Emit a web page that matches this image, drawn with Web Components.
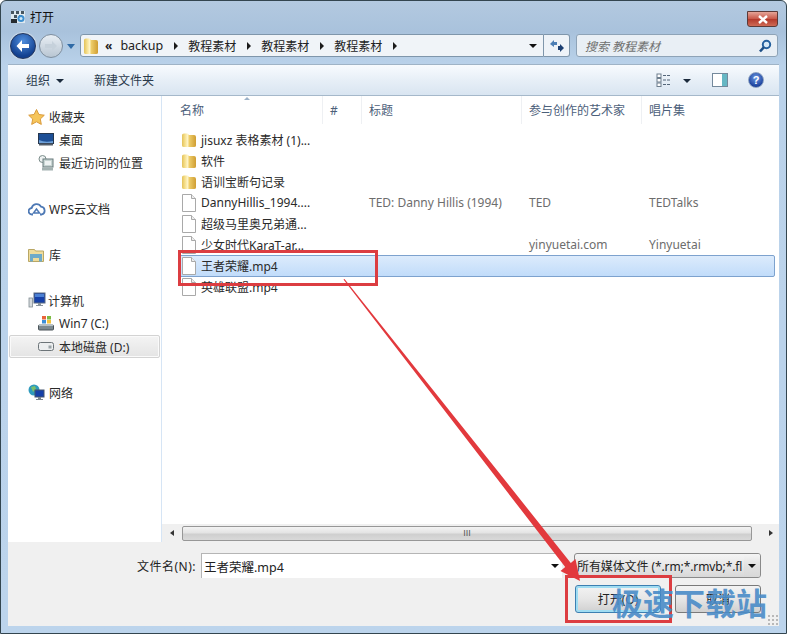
<!DOCTYPE html>
<html><head><meta charset="utf-8"><style>
html,body{margin:0;padding:0;width:787px;height:634px;overflow:hidden}
body{font:12px "Noto Sans","Noto Sans CJK SC",sans-serif;color:#2a2a2a}
</style></head><body>
<x-dialog>
 <x-titlebar slot="title"></x-titlebar>
 <x-navbar slot="nav"></x-navbar>
 <x-toolbar slot="tools"></x-toolbar>
 <x-sidebar slot="side"></x-sidebar>
 <x-filelist slot="list"></x-filelist>
 <x-footer slot="foot"></x-footer>
 <x-annotations slot="over"></x-annotations>
</x-dialog>
<script>
const FGRAD=`<defs><linearGradient id="fg" x1="0" x2="1" y1="0" y2="0"><stop offset="0" stop-color="#e3c25a"/><stop offset=".22" stop-color="#f6e08e"/><stop offset=".42" stop-color="#fff6cc"/><stop offset=".5" stop-color="#efcf6c"/><stop offset="1" stop-color="#cf9d32"/></linearGradient></defs>`;
const FOLDER=`<svg width="14" height="16" viewBox="0 0 14 16" style="margin-left:1px">${FGRAD}<path d="M0 3Q0 1.500 2 1.500h3.500L7 3h5Q14 3 14 5v8.500Q14 15 12 15H2Q0 15 0 13.500z" fill="url(#fg)"/></svg>`;
const DOC=`<svg width="16" height="18" viewBox="0 0 16 18"><path d="M1.500.5h9l4 4v13h-13z" fill="#fff" stroke="#a9a9a9"/><path d="M10.500.5v4h4" fill="#eee" stroke="#a9a9a9"/></svg>`;
function def(name,css,html,init){
 customElements.define(name,class extends HTMLElement{
  constructor(){super();this.attachShadow({mode:'open'}).innerHTML=`<style>${css}</style>${html}`;}
  connectedCallback(){init&&init.call(this,this.shadowRoot)}
 });
}
def('x-dialog',`
:host{display:block;position:relative;width:787px;height:634px;box-sizing:border-box;border:1px solid #33454f;border-radius:6px 6px 0 0;overflow:hidden;background:linear-gradient(#b3c9e0 0,#a9c2dc 30px,#bad2ea 64px,#bcd4ec 100%)}
.col{display:flex;flex-direction:column;height:100%;box-sizing:border-box;padding:0 7px 7px}
.main{display:flex;height:446px;background:#fff}
.inner{background:#f0f0f0;display:flex;flex-direction:column;flex:1;border-top:1px solid #9fb3c6;box-sizing:border-box}
`,`<div class="col"><slot name="title"></slot><slot name="nav"></slot>
<div class="inner"><slot name="tools"></slot><div class="main"><slot name="side"></slot><slot name="list"></slot></div><slot name="foot"></slot></div></div>
<slot name="over"></slot>`);
def('x-titlebar',`
:host{display:flex;height:31px;align-items:center;gap:4px;font-size:12px;color:#111;position:relative;padding-left:2px}
svg{display:block}
.x{margin-left:auto;width:31px;height:16px;box-sizing:border-box;margin-top:5px;margin-right:1px;border:1px solid #5c3a38;border-radius:0 0 3px 3px;background:linear-gradient(#e5a598,#c9594a 48%,#b33a2c 52%,#cf6a55);display:flex;align-items:center;justify-content:center}
`,`<svg width="16" height="16" viewBox="0 0 16 16"><rect x="1" y="2" width="14" height="12" fill="#dfe9ef"/><path d="M1 2h3v3H1zM6 2h3v3H6zM11 2h3v3h-3zM4 6h3v3H4zM9 6h3v3H9z" fill="#46555f"/><circle cx="11" cy="9.500" r="3.500" fill="#3d8fd0"/><circle cx="11" cy="9.500" r="1.500" fill="#cfe8f8"/><rect x="1" y="10" width="6" height="4" fill="#262b2f"/></svg><span>打开</span>
<div class="x"><svg width="12" height="9" viewBox="0 0 12 9"><path d="M2 1l8 7M10 1L2 8" stroke="#fff" stroke-width="2.400"/></svg></div>`);
def('x-navbar',`
:host{display:flex;height:32px;align-items:flex-start;box-sizing:border-box;padding-top:2px;font-size:12px;color:#222}
.back{width:26px;height:26px;margin:-1px 0 0 2px;border-radius:50%;background:radial-gradient(circle at 50% 30%,#4f8ede,#12408f 72%);border:1px solid #23355c;box-sizing:border-box;display:flex;align-items:center;justify-content:center;box-shadow:0 0 0 1px #c7d6e6}
.fwd{width:24px;height:24px;margin:0 0 0 3px;border-radius:50%;background:linear-gradient(#e8eef4,#b9c6d3);border:1px solid #7f8f9f;box-sizing:border-box;display:flex;align-items:center;justify-content:center}
.dd{width:0;height:0;border:4px solid transparent;border-top:5px solid #2f6aa6;border-bottom:0;margin:10px 4px 0 4px}
.addr{display:flex;align-items:center;width:464px;height:23px;box-sizing:border-box;border:1px solid #7f96ab;border-radius:3px 0 0 3px;background:#f0f4f8;padding-left:3px;margin-left:1px}
.addr svg.f{margin-right:7px}
.seg{display:flex;align-items:center}
.tri{width:0;height:0;border:4px solid transparent;border-left:4px solid #1b1b1b;border-right:0;margin:0 10px 0 11px}
.ld{margin-left:auto;margin-right:6px;width:0;height:0;border:4px solid transparent;border-top:4px solid #111;border-bottom:0}
.ref{width:26px;height:23px;box-sizing:border-box;border:1px solid #7f96ab;border-left:0;border-radius:0 3px 3px 0;background:#eef3f8;display:flex;align-items:center;justify-content:center;margin-right:6px}
.search{width:202px;height:23px;box-sizing:border-box;border:1px solid #8ea3b7;border-radius:3px;background:#e9eff5;display:flex;align-items:center;padding-left:8px;color:#6f6f6f;font-size:12px;font-style:italic;justify-content:space-between;padding-right:5px}
`,`<div class="back"><svg width="16" height="14" viewBox="0 0 16 14"><path d="M7 1L1.500 7 7 13V9h7V5H7z" fill="#fff"/></svg></div>
<div class="fwd"><svg width="14" height="12" viewBox="0 0 14 12"><path d="M8 1l5 5-5 5V8H1V4h7z" fill="#c6d1db"/></svg></div><div class="dd"></div>
<div class="addr"><svg class="f" width="14" height="18" viewBox="0 0 14 18">${FGRAD}<path d="M0 3Q0 1.500 2 1.500h3.500L7 3h5Q14 3 14 5v10.500Q14 17 12 17H2Q0 17 0 15.500z" fill="url(#fg)"/></svg>
<span style="font-size:12px;margin-right:9px;font-weight:bold;letter-spacing:-1px">«</span><span class="seg" style="font-size:12.500px">backup</span><i class="tri"></i><span class="seg">教程素材</span><i class="tri"></i><span class="seg">教程素材</span><i class="tri"></i><span class="seg">教程素材</span><i class="tri"></i><i class="ld"></i></div>
<div class="ref"><svg width="16" height="16" viewBox="0 0 16 16"><path d="M1 6l4-4v2h3v3H5v2z" fill="#4d7fb5"/><path d="M15 10l-4 4v-2H9V8h2V6z" fill="#1c3f72"/></svg></div>
<div class="search"><span>搜索 教程素材</span><svg width="14" height="14" viewBox="0 0 14 14"><circle cx="8.500" cy="5.500" r="3.700" fill="#d6e8f6" stroke="#26619f" stroke-width="2"/><path d="M6 8L2 12.500" stroke="#1e4f86" stroke-width="2.600"/></svg></div>`);
def('x-toolbar',`
:host{display:flex;height:31px;align-items:center;box-sizing:border-box;border-bottom:1px solid #a5b8ca;background:linear-gradient(#f8fbfe,#e7eff7 50%,#d9e5f1);padding-left:18px;font-size:12px;color:#2a3a4c}
.tri{width:0;height:0;border:4px solid transparent;border-top:4px solid #1b2a3c;border-bottom:0;margin:2px 0 0 6px}
.nw{margin-left:30px}
.r{margin-left:auto;display:flex;align-items:center}
.help{width:16px;height:16px;box-sizing:border-box;border-radius:50%;background:radial-gradient(circle at 50% 35%,#6c9ae6,#1a3f9a 75%);color:#fff;font:bold 11px "Liberation Sans",sans-serif;display:flex;align-items:center;justify-content:center;margin:0 15px 0 20px;border:1px solid #8aa0c0}
`,`<span>组织</span><i class="tri"></i><span class="nw">新建文件夹</span>
<div class="r"><svg width="16" height="15" viewBox="0 0 16 15"><rect x="1" y="1" width="4" height="3.500" fill="#fff" stroke="#6e7f8e"/><rect x="1" y="5.500" width="4" height="3.500" fill="#fff" stroke="#6e7f8e"/><rect x="1" y="10" width="4" height="3.500" fill="#fff" stroke="#6e7f8e"/><path d="M7 2.500h8M7 7h8M7 11.500h8" stroke="#55677a" stroke-dasharray="3 1"/></svg>
<i class="tri" style="margin-left:11px;margin-right:21px;border-width:4px;border-top-color:#1b2a3c"></i>
<svg width="16" height="14" viewBox="0 0 16 14"><rect x=".5" y=".5" width="15" height="13" fill="#fff" stroke="#74899c"/><rect x="10" y="1" width="5" height="12" fill="#66b7c4"/></svg>
<div class="help">?</div></div>`);
const ICONS={
star:`<svg width="17" height="16" viewBox="0 0 17 16"><path d="M8.500.5l2.400 5 5.400.7-4 3.800 1 5.400-4.800-2.600-4.800 2.600 1-5.400-4-3.800 5.400-.7z" fill="#f6c55a" stroke="#d99a3c"/></svg>`,
desk:`<svg width="16" height="13" viewBox="0 0 16 13"><rect x=".5" y=".5" width="15" height="10" fill="#1d4f96" stroke="#26374f"/><path d="M1 7q6 3 14 1v2H1z" fill="#6ea0d8"/><rect x="1" y="10.500" width="14" height="2" fill="#555e69"/></svg>`,
recent:`<svg width="16" height="16" viewBox="0 0 16 16"><circle cx="4.500" cy="4" r="3.500" fill="#eef2f2" stroke="#7b8c8a"/><rect x="5" y="4" width="10" height="8" fill="#c7d4d2" stroke="#66797a"/><rect x="7" y="6" width="6" height="4" fill="#eef2f2"/><rect x="4" y="12.500" width="11" height="3" fill="#a4b2b1"/></svg>`,
cloud:`<svg width="18" height="14" viewBox="0 0 18 14"><path d="M5 12.500H4A3.200 3.200 0 0 1 3.700 6 5 5 0 0 1 13 4.700a4 4 0 0 1 .800 7.800H12" fill="none" stroke="#4e79b5" stroke-width="1.800"/><path d="M8.500 7l-3 4h6z" fill="none" stroke="#4e79b5" stroke-width="1.500"/></svg>`,
lib:`<svg width="16" height="16" viewBox="0 0 16 16"><path d="M.5 2.500h6l1 1.500h8v10.500H.5z" fill="#efdc9c" stroke="#b9a765"/><path d="M2 7h12v7.500H11V11H5v3.500H2z" fill="#6eaac9"/></svg>`,
pc:`<svg width="18" height="17" viewBox="0 0 18 17"><rect x="1" y="6" width="3.500" height="9" fill="#d6dadc" stroke="#7f8a92" stroke-width=".8"/><rect x="6" y="1" width="11" height="10" fill="#1640a8" stroke="#5a6a80"/><path d="M7 2h9v3H7z" fill="#4b80d4"/><path d="M10 11h3v2h2v1H8v-1h2z" fill="#8a949c"/></svg>`,
win:`<svg width="16" height="17" viewBox="0 0 16 17"><rect x=".5" y="10" width="15" height="5" rx="1" fill="#7d8a90" stroke="#4a5358"/><rect x="1" y="9" width="14" height="2" fill="#b6c0c4"/><rect x="4" y="1" width="4" height="3.500" fill="#e9643a"/><rect x="9" y="1" width="4" height="3.500" fill="#7dbb42"/><rect x="4" y="5" width="4" height="3.500" fill="#3c8fd8"/><rect x="9" y="5" width="4" height="3.500" fill="#f3c23c"/></svg>`,
disk:`<svg width="16" height="9" viewBox="0 0 16 9"><rect x=".5" y=".5" width="15" height="8" rx="2" fill="#eceeef" stroke="#6c7478"/><rect x="10.500" y="3.500" width="3" height="3" fill="#9aa3a7"/></svg>`,
net:`<svg width="18" height="17" viewBox="0 0 18 17"><circle cx="6" cy="6" r="5.500" fill="#2f9bbd"/><path d="M3 3l4-1 1 3-3 3z" fill="#7cc06b"/><rect x="7" y="6" width="9" height="7" fill="#1640a8" stroke="#44556c"/><path d="M10 13h3v2h2v1H8v-1h2z" fill="#7c868e"/></svg>`};
def('x-sidebar',`
:host{display:block;width:154px;flex:none;box-sizing:border-box;padding:9px 1px 0;border-right:1px solid #d6e5f5;color:#2a2a2a}
.r{height:23px;display:flex;align-items:center;box-sizing:border-box;white-space:nowrap;width:151px}
.l0{padding-left:19px}.l1{padding-left:29px}
.i{width:21px;display:flex;justify-content:flex-start;flex:none}
.sel{background:linear-gradient(#f4f4f4,#e4e4e4);border:1px solid #d3d3d3;border-radius:2px;box-shadow:inset 0 0 0 1px #fafafa;padding-left:28px}
`,['star:0:收藏夹','desk:1:桌面','recent:1:最近访问的位置','','cloud:0:WPS云文档','','lib:0:库','','pc:0:计算机','win:1:Win7 (C:)','disk:1:本地磁盘 (D:):sel','','net:0:网络'].map(s=>{
 if(!s)return '<div class="r"></div>';
 const m=s.match(/^(\w+):(\d):(.*?)(:sel)?$/);
 const w=m[1]=='pc'?'style="width:20px"':'';
 return `<div class="r l${m[2]} ${m[4]?'sel':''}"><span class="i" ${w}>${ICONS[m[1]]}</span><span>${m[3]}</span></div>`}).join(''));
def('x-filelist',`
:host{display:flex;flex-direction:column;flex:1;min-width:0;color:#333}
.hd{height:28px;display:flex;padding-left:11px;color:#4c607a;flex:none;position:relative;margin-bottom:5px}
.hd span{box-sizing:border-box;height:28px;display:flex;align-items:center;padding-left:7px;border-right:1px solid #eef0f3;white-space:nowrap}
.hd span:last-child{border:0}
.up{position:absolute;left:82px;top:1px;width:0;height:0;border:3px solid transparent;border-bottom:3px solid #9bb1c8;border-top:0}
.rows{flex:1;min-height:0}
.row{height:21px;display:flex;align-items:center;padding-left:11px;box-sizing:border-box;white-space:nowrap;margin-right:4px}
.row .c{box-sizing:border-box;padding-left:7px;color:#6d6d6d;white-space:nowrap}
.nm{display:flex;align-items:center;width:150px;flex:none;color:#2a2a2a;padding-left:8px;box-sizing:border-box}
.nm .ic{width:20px;flex:none;display:flex;justify-content:flex-start}
.sel{background:linear-gradient(#dcebfc,#c1dcfa);border:1px solid #7da2ce;height:22px;border-radius:2px;margin-left:16px;padding-left:0;margin-bottom:-1px}
.sb{height:18px;display:flex;align-items:center;flex:none;background:#f0f0f0;box-sizing:border-box}
.thumb{width:570px;height:15px;margin-left:8px;border:1px solid #979797;border-radius:2px;box-sizing:border-box;background:linear-gradient(#f3f3f3,#e4e4e4 45%,#cfcfcf 55%,#d9d9d9);display:flex;align-items:center;justify-content:center;font:9px "Liberation Sans",sans-serif;color:#555}
.a{width:0;height:0;border:3.500px solid transparent;flex:none}
.al{border-right:4px solid #333;border-left:0;margin-left:8px}
.ar{border-left:4px solid #333;border-right:0;margin-left:17px}
`,`<div class="hd"><i class="up"></i><span style="width:150px">名称</span><span style="width:39px">#</span><span style="width:160px">标题</span><span style="width:120px">参与创作的艺术家</span><span>唱片集</span></div>
<div class="rows">${[
['f','jisuxz 表格素材 (1)...'],['f','软件'],['f','语训宝断句记录'],
['d','DannyHillis_1994....','TED: Danny Hillis (1994)','TED','TEDTalks'],
['d','超级马里奥兄弟通...'],['d','少女时代KaraT-ar...','','yinyuetai.com','Yinyuetai'],
['d','王者荣耀.mp4','','','',1],['d','英雄联盟.mp4']
].map(r=>`<div class="row ${r[5]?'sel':''}"><div class="nm" ${r[5]?'style="width:144px;padding-left:2px"':''}><span class="ic">${r[0]=='f'?FOLDER:DOC}</span>${r[1]}</div><div class="c" style="width:39px"></div><div class="c" style="width:160px">${r[2]||''}</div><div class="c" style="width:120px">${r[3]||''}</div><div class="c">${r[4]||''}</div></div>`).join('')}</div>
<div class="sb"><i class="a al"></i><div class="thumb">III</div><i class="a ar"></i></div>`);
def('x-footer',`
:host{display:block;flex:1;background:#f0f0f0;position:relative;font-size:12px;color:#222}
.a{display:flex;align-items:center;height:25px;margin-top:11px}
.lb{width:188px;text-align:right;box-sizing:border-box;letter-spacing:.5px}
.inp{width:361px;height:25px;background:#fff;border:1px solid #b5b5b5;border-width:1px 0 0 1px;box-sizing:border-box;display:flex;align-items:center;padding-left:2px;position:relative;margin-left:5px;margin-right:12px;font-size:12.500px}
.t{position:absolute;right:3px;top:10px;width:0;height:0;border:4px solid transparent;border-top:4px solid #111;border-bottom:0}
.sel{width:187px;height:25px;box-sizing:border-box;border:1px solid #8a8a8a;border-radius:3px;background:linear-gradient(#f4f4f4,#e8e8e8 50%,#d8d8d8);display:flex;align-items:center;padding-left:2px;position:relative;overflow:hidden;white-space:nowrap;font-size:12px;letter-spacing:-.1px}
.sel b{position:absolute;right:0;top:0;bottom:0;width:16px;background:linear-gradient(#f4f4f4,#e2e2e2 50%,#d8d8d8);display:flex;align-items:center;justify-content:center}
.sel i{width:0;height:0;border:4px solid transparent;border-top:4px solid #111;border-bottom:0}
.b{display:flex;justify-content:flex-end;gap:14px;padding-right:18px;margin-top:7px}
.btn{width:86px;height:28px;box-sizing:border-box;border-radius:3px;border:1px solid #7a7a7a;background:linear-gradient(#f3f3f3,#e6e6e6 50%,#d0d0d0);display:flex;align-items:center;justify-content:center}
.btn.p{border-color:#3c7fb1;box-shadow:inset 0 0 0 2px #9fdcf2}
.grip{position:absolute;right:1px;bottom:1px;width:11px;height:11px;background-image:radial-gradient(#b8b8b8 1px,transparent 1.200px);background-size:4px 4px}
`,`<div class="a"><div class="lb">文件名(N):</div><div class="inp">王者荣耀.mp4<i class="t"></i></div><div class="sel">所有媒体文件 (*.rm;*.rmvb;*.fl<b><i></i></b></div></div>
<div class="b"><div class="btn p">打开(O)</div><div class="btn">取消</div></div><div class="grip"></div>`);
def('x-annotations',`
:host{position:absolute;left:-1px;top:-1px;width:787px;height:634px;display:block;pointer-events:none}
svg{position:absolute;left:0;top:0}
.wm{position:absolute;left:612px;top:582px;font:bold 31px/40px "Noto Sans CJK SC",sans-serif;color:#4a8cc8;opacity:.9;white-space:nowrap}
`,`<svg width="787" height="634"><g fill="none" stroke="#dc3d41" stroke-width="3"><rect x="179.500" y="251.500" width="197" height="33"/><rect x="566.500" y="576.500" width="104" height="45"/></g>
<path d="M343.500 279.500L344.500 279L570.800 562.900L575.500 559L580 581L560.500 571L565.200 567.100Z" fill="#e2393d"/></svg>
<div class="wm">极速下载站</div>`);
</script></body></html>
